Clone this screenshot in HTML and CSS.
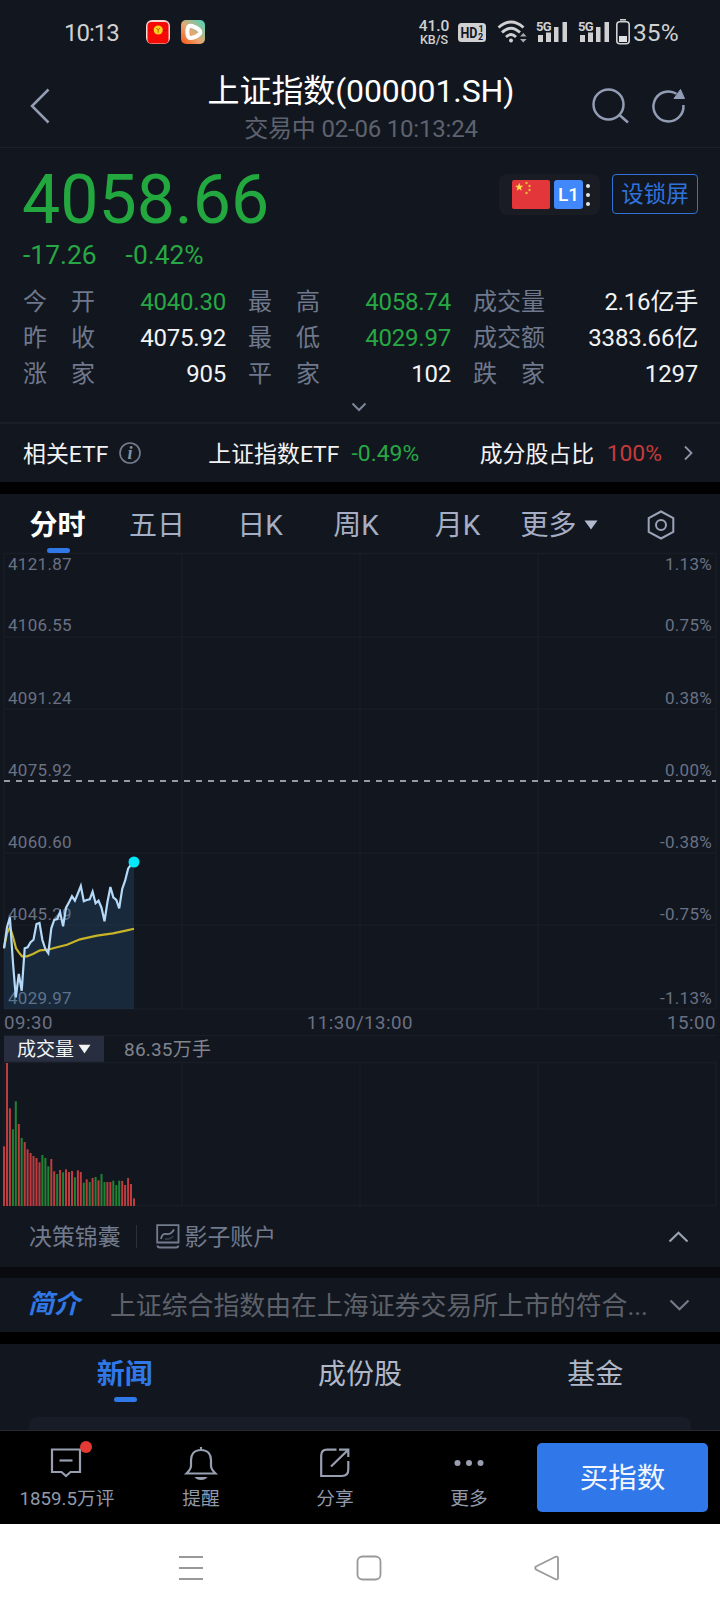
FILE: index.html
```html
<!DOCTYPE html>
<html lang="zh-CN">
<head>
    <meta charset="UTF-8">
    <title>上证指数</title>
    <link rel="stylesheet" href="styles.css">
</head>
<body>

<div class="status-bar">
    <span class="clock">10:13</span>
    <svg class="app-icon" width="24" height="24" viewBox="0 0 24 24">
        <rect width="24" height="24" rx="6" fill="#f7d5d0"/>
        <rect x="1.5" y="2" width="21" height="21.5" rx="4" fill="#f50a05"/>
        <path d="M3 10 Q12 13 21 10" fill="none" stroke="#c40b06"/>
        <circle cx="12.2" cy="10" r="4.6" fill="#fbd01c"/>
        <path d="M10.5 8 L12.2 10 L14 8 M12.2 10 V12.5" fill="none" stroke="#b56a00"/>
    </svg>
    <svg class="app-icon" width="24" height="24" viewBox="0 0 24 24">
        <defs>
            <linearGradient id="play" x1="0" y1="1" x2="1" y2="0">
                <stop offset="0" stop-color="#f9550f"/>
                <stop offset=".45" stop-color="#e8a773"/>
                <stop offset="1" stop-color="#3fd8c0"/>
            </linearGradient>
        </defs>
        <rect width="24" height="24" rx="5" fill="url(#play)"/>
        <path d="M7 7.5 Q8 5 11 6 Q17 8 19 11 Q20 13 18 14.500 Q14 18 9.500 18 Q7 18 6.500 14 Q6 10 7 7.500Z" fill="none" stroke="#fff" stroke-width="4" stroke-linejoin="round"/>
    </svg>
    <div class="net-speed"><span>41.0</span><small>KB/S</small></div>
    <svg class="hd" width="28" height="19" viewBox="0 0 28 19">
        <rect width="28" height="19" rx="3.500" fill="#d0d0d2"/>
        <text x="2.500" y="14.500" class="hd-text" textLength="17" lengthAdjust="spacingAndGlyphs">HD</text>
        <text x="20.500" y="8.800" class="hd-num">1</text>
        <text x="20" y="17.200" class="hd-num">2</text>
    </svg>
    <svg class="wifi" width="30" height="24" viewBox="0 0 30 24">
        <g fill="none" stroke="#d0d0d2" stroke-width="2.800">
            <path d="M1.500 7.500 Q14 -3.500 26.500 7.500"/>
            <path d="M5 12.500 Q14 4 23 12.500"/>
            <path d="M9 17 Q14 12 19 17"/>
        </g>
        <circle cx="14" cy="20.500" r="2" fill="#d0d0d2"/>
        <path d="M23 16.500 L26.300 13 L29.600 16.500Z M23 19 H29.600 L26.300 22.500Z" fill="#a8a9ad"/>
    </svg>
    <svg class="signal" width="32" height="24" viewBox="0 0 32 24">
        <text x="0" y="10.500">5G</text>
        <path d="M2 15h5v7H2z M10 12.500h5V22h-5z M18 7h4.500v15H18z M26.500 2H31v20h-4.500z"/>
    </svg>
    <svg class="signal" width="32" height="24" viewBox="0 0 32 24">
        <text x="0" y="10.500">5G</text>
        <path d="M2 15h5v7H2z M10 12.500h5V22h-5z M18 7h4.500v15H18z M26.500 2H31v20h-4.500z"/>
    </svg>
    <svg class="battery" width="14" height="26" viewBox="0 0 14 26">
        <path d="M4 .8H10" stroke="#d0d0d2" stroke-width="1.600"/>
        <rect x=".8" y="2.800" width="12.400" height="22" rx="3" fill="none" stroke="#d0d0d2" stroke-width="1.600"/>
        <rect x="3" y="17" width="8" height="6" fill="#e2e2e4"/>
    </svg>
    <span class="percent">35%</span>
</div>

<header class="header">
    <svg class="back" width="20" height="36" viewBox="0 0 20 36">
        <path d="M18.500 1.500 L2 18 L18.500 34.500"/>
    </svg>
    <div class="title">
        <h1>上证指数(000001.SH)</h1>
        <p>交易中 02-06 10:13:24</p>
    </div>
    <svg class="search" width="38" height="36" viewBox="0 0 38 36">
        <circle cx="16.500" cy="16.500" r="15"/>
        <path d="M27.500 27 L36 34.500"/>
    </svg>
    <svg class="refresh" width="34" height="36" viewBox="0 0 34 36">
        <path d="M24.500 5.800 A15 15 0 1 0 31.400 17"/>
        <path class="head" d="M22 10.500 L28.500 1.500 L32.500 10.500Z"/>
    </svg>
</header>

<section class="quote">
    <div class="quote-top">
        <span class="price">4058.66</span>
        <div class="market">
            <svg width="38" height="29" viewBox="0 0 38 29">
                <rect width="38" height="29" rx="2" fill="#e2363a"/>
                <path d="M7.200 2.800 L8.300 5.700 L11.300 5.800 L8.900 7.700 L9.800 10.700 L7.200 9 L4.600 10.700 L5.500 7.700 L3.100 5.800 L6.100 5.700Z" fill="#fbdf4b"/>
                <g fill="#e9b640">
                    <circle cx="14.500" cy="3" r="1.200"/>
                    <circle cx="17.500" cy="6" r="1.200"/>
                    <circle cx="17.500" cy="10" r="1.200"/>
                    <circle cx="14.500" cy="13" r="1.200"/>
                </g>
            </svg>
            <span class="level">L1</span>
            <span class="dots"><i></i><i></i><i></i></span>
        </div>
        <button class="lock">设锁屏</button>
    </div>
    <div class="change"><span>-17.26</span><span>-0.42%</span></div>
    <div class="stats">
        <div><label>今　开</label><b class="down">4040.30</b></div>
        <div><label>最　高</label><b class="down">4058.74</b></div>
        <div><label>成交量</label><b>2.16亿手</b></div>
        <div><label>昨　收</label><b>4075.92</b></div>
        <div><label>最　低</label><b class="down">4029.97</b></div>
        <div><label>成交额</label><b>3383.66亿</b></div>
        <div><label>涨　家</label><b>905</b></div>
        <div><label>平　家</label><b>102</b></div>
        <div><label>跌　家</label><b>1297</b></div>
    </div>
    <svg class="expand" width="16" height="10" viewBox="0 0 16 10"><path d="M1.500 1.500 L8 8 L14.500 1.500"/></svg>
</section>

<section class="etf">
    <span>相关ETF</span>
    <svg class="info" width="22" height="22" viewBox="0 0 22 22">
        <circle cx="11" cy="11" r="10"/>
        <text x="11" y="17" text-anchor="middle">i</text>
    </svg>
    <span class="etf-name">上证指数ETF</span>
    <span class="etf-rate down">-0.49%</span>
    <span class="share">成分股占比</span>
    <span class="share-rate">100%</span>
    <svg class="go" width="9" height="16" viewBox="0 0 9 16"><path d="M1 1.500 L7.500 8 L1 14.500"/></svg>
</section>

<nav class="periods">
    <a class="active">分时</a>
    <a>五日</a>
    <a>日K</a>
    <a>周K</a>
    <a>月K</a>
    <a>更多<svg class="caret" width="14" height="10" viewBox="0 0 14 10"><path d="M.5 .5 H13.500 L7 9.500Z"/></svg></a>
    <a><svg class="gear" width="28" height="30" viewBox="0 0 28 30">
        <path d="M14 1.500 L26.300 8 V22 L14 28.500 L1.700 22 V8Z"/>
        <circle cx="14" cy="15" r="5"/>
    </svg></a>
</nav>

<svg class="chart" width="720" height="482" viewBox="0 0 720 482">
    <g class="grid">
        <path d="M4 .5H716 M4 84H716 M4 156H716 M4 300H716 M4 372H716 M4 456H716"/>
        <path d="M4 0V456 M182 0V456 M360 0V456 M538 0V456 M716 0V456"/>
    </g>
    <path class="base-line" d="M4 228H716"/>
    <g class="axis">
        <text x="8" y="17">4121.87</text>
        <text x="8" y="78">4106.55</text>
        <text x="8" y="151">4091.24</text>
        <text x="8" y="223">4075.92</text>
        <text x="8" y="295">4060.60</text>
        <text x="8" y="367">4045.29</text>
        <text x="8" y="451">4029.97</text>
    </g>
    <g class="axis right">
        <text x="712" y="17">1.13%</text>
        <text x="712" y="78">0.75%</text>
        <text x="712" y="151">0.38%</text>
        <text x="712" y="223">0.00%</text>
        <text x="712" y="295">-0.38%</text>
        <text x="712" y="367">-0.75%</text>
        <text x="712" y="451">-1.13%</text>
    </g>
    <polygon id="area"/>
    <polyline id="average" points="4,395 7,380 10,374.300 13,383.700 16,395.300 19,399.700 22,403.300 27,403.300 33,401 40,397.300 48,396.700 55,394.700 67,391.700 80,386.300 97,382.700 113,380.300 127,377.300 134,375.700"/>
    <polyline id="price"/>
    <circle cx="134" cy="309" r="5.500" fill="#00e8fb"/>
    <g class="time">
        <text x="4" y="476">09:30</text>
        <text x="360" y="476" text-anchor="middle">11:30/13:00</text>
        <text x="716" y="476" text-anchor="end">15:00</text>
    </g>
</svg>

<div class="volume-head">
    <span class="volume-name">成交量<svg width="13" height="10" viewBox="0 0 13 10"><path d="M.5 .8 H12.500 L6.500 9.500Z"/></svg></span>
    <span class="volume-value">86.35万手</span>
</div>
<svg class="volume" width="720" height="144" viewBox="0 0 720 144">
    <path class="grid" d="M4 .5H716 M4 143.500H716 M4 0V144 M182 0V144 M360 0V144 M538 0V144 M716 0V144"/>
    <g id="bars"></g>
</svg>

<div class="tools">
    <span>决策锦囊</span>
    <i class="divider"></i>
    <svg class="shadow-icon" width="24" height="25" viewBox="0 0 24 25">
        <path d="M1.200 1.200 H22.500 V18.500 H1.200Z M1.500 21.500 Q1.500 23.500 4 23.500 H20 Q22.300 23.500 22.300 21.500"/>
        <path d="M5 15 Q6 9.500 10 10 Q15 11 18 5.500"/>
        <path d="M9 15 Q15 15.500 17 12" opacity=".35"/>
    </svg>
    <span>影子账户</span>
    <svg class="arrow" width="21" height="12" viewBox="0 0 21 12"><path d="M1.500 10.500 L10.500 1.700 L19.500 10.500"/></svg>
</div>

<div class="intro">
    <em>简介</em>
    <span>上证综合指数由在上海证券交易所上市的符合...</span>
    <svg class="arrow" width="21" height="12" viewBox="0 0 21 12"><path d="M1.500 1.500 L10.500 10.300 L19.500 1.500"/></svg>
</div>

<nav class="tabs">
    <a class="active">新闻</a>
    <a>成份股</a>
    <a>基金</a>
</nav>
<div class="news"></div>

<footer class="actions">
    <a>
        <svg width="42" height="40" viewBox="0 0 42 40">
            <path d="M6 8.500 H34 V31 H24.500 L20 35 L15.500 31 H6Z"/>
            <path d="M13.500 19.500 H26.500"/>
            <circle class="dot" cx="40" cy="6" r="6"/>
        </svg>
        <span>1859.5万评</span>
    </a>
    <a>
        <svg width="42" height="40" viewBox="0 0 42 40">
            <path d="M21 9 C13.500 9 11 14 11 19 V25 Q11 28 6.500 32.500 H35.500 Q31 28 31 25 V19 C31 14 28.500 9 21 9Z M21 9 V6"/>
            <path class="solid" d="M14.500 36 H27.500 Q25.500 39 21 39 Q16.500 39 14.500 36Z"/>
        </svg>
        <span>提醒</span>
    </a>
    <a>
        <svg width="42" height="40" viewBox="0 0 42 40">
            <path d="M22.500 8.700 H13 Q7.200 8.700 7.200 14.500 V35 H28 Q34.300 35 34.300 28.500 V20"/>
            <path d="M17 25.500 L34 9 M25 8.700 H34.300 V16"/>
        </svg>
        <span>分享</span>
    </a>
    <a>
        <svg width="42" height="40" viewBox="0 0 42 40">
            <g class="solid"><circle cx="9.500" cy="22" r="3"/><circle cx="21" cy="22" r="3"/><circle cx="32.500" cy="22" r="3"/></g>
        </svg>
        <span>更多</span>
    </a>
    <button class="buy">买指数</button>
</footer>

<div class="system-nav">
    <svg width="26" height="26" viewBox="0 0 26 26"><path d="M1 2H25 M1 13H25 M1 24H25"/></svg>
    <svg width="26" height="26" viewBox="0 0 26 26"><rect x="1.500" y="1.500" width="23" height="23" rx="5"/></svg>
    <svg width="26" height="26" viewBox="0 0 26 26"><path d="M2 11.500 L21.500 1.800 Q24 1 24 3.500 V22.500 Q24 25 21.500 24.200 L2 14.500 Q.5 13 2 11.500Z"/></svg>
</div>

<script>
    const STEP = 130 / 44;

    // Curva por minuto
    const prices = [395.3, 374.3, 364.3, 408.7, 444.3, 421, 437.7, 395.3, 394.3, 389.3, 386.7, 371, 370, 387, 396,
        400.3, 375.3, 367, 366, 359.3, 373.3, 354.7, 349.3, 343.3, 347.7, 340.3, 333, 348.3, 347, 346.3, 338.7,
        350.3, 347.7, 354.7, 368.3, 349.3, 334, 344.3, 347, 355.3, 336, 327.7, 315.7, 311.5, 309];
    const points = prices.map((y, i) => (4 + i * STEP).toFixed(1) + "," + y).join(" ");
    document.getElementById("price").setAttribute("points", points);
    document.getElementById("area").setAttribute("points", "4,456 " + points + " 134,456");

    // Volumen: alto y color
    const heights = [59.7, 143, 97.7, 76.7, 104.7, 82, 68, 64, 56.7, 53, 50, 48, 43.7, 51, 48, 39.7, 47, 34.7, 32,
        36, 33.7, 36.7, 34, 35, 28.7, 35.7, 34, 23.3, 26.7, 24, 28, 29, 25.7, 32, 24, 24, 24, 25.3, 21, 25.3, 25,
        21, 28, 22, 7.7];
    const colors = "rrrggrgrrrrrrgggrrgrgrrrgrrgrgrgrggrrgggrrrrr";
    let bars = "";
    heights.forEach((h, i) => {
        const x = (3 + i * STEP).toFixed(1);
        bars += `<rect class="${colors[i]}" x="${x}" y="${144 - h}" width="2" height="${h}"/>`;
    });
    document.getElementById("bars").innerHTML = bars;
</script>

</body>
</html>
```
FILE: styles.css
```css
* {
    box-sizing: border-box;
}
body {
    margin: 0;
    width: 720px;
    background-color: #12171f;
    color: #f2f3f5;
    font-family: Roboto, "Noto Sans CJK SC", sans-serif;
    font-size: 24px;
}
svg {
    display: block;
    flex: none;
    overflow: visible;
}
span, a, label, b {
    white-space: nowrap;
}
button {
    padding: 0;
    font-family: inherit;
}
.down {
    color: #27a844;
}

/* barra de estado */
.status-bar {
    display: flex;
    align-items: center;
    height: 64px;
    padding-left: 64px;
    color: #d0d0d2;
}
.clock {
    width: 82px;
    padding-top: 1px;
    font-size: 24px;
    letter-spacing: -1px;
}
.app-icon {
    margin-right: 11px;
}
.net-speed {
    display: flex;
    flex-direction: column;
    align-items: center;
    width: 34px;
    margin-left: 201px;
    font-weight: 500;
    font-size: 15.500px;
    line-height: 13px;
}
.net-speed small {
    font-size: 12.500px;
    line-height: 11px;
    margin-top: 1px;
}
.hd {
    margin-left: 7px;
}
.hd-text {
    font-size: 14px;
    font-weight: bold;
    fill: #12171f;
}
.hd-num {
    font-size: 9px;
    font-weight: bold;
    fill: #12171f;
}
.wifi {
    margin-left: 11px;
}
.signal {
    margin-left: 9px;
    fill: #d0d0d2;
}
.signal + .signal {
    margin-left: 10px;
}
.signal text {
    font-size: 13px;
    font-weight: bold;
    letter-spacing: -.8px;
}
.battery {
    margin-left: 6px;
}
.percent {
    margin-left: 3px;
    padding-top: 1px;
    font-size: 24.500px;
    letter-spacing: .1px;
}

/* cabecera */
.header {
    display: flex;
    align-items: flex-start;
    height: 84px;
    border-bottom: 1px solid #1b2029;
}
.header svg {
    margin-top: 24px;
    fill: none;
    stroke: #929cb4;
    stroke-width: 2.500;
}
.header .back {
    margin-left: 30px;
}
.title {
    width: 542px;
    padding-left: 80px;
    text-align: center;
}
.title h1 {
    margin: 7px 0 0;
    font-size: 32px;
    font-weight: normal;
    line-height: 40px;
    letter-spacing: -.1px;
    color: #fff;
}
.title p {
    margin: 3px 0 0;
    font-size: 24px;
    line-height: 30px;
    letter-spacing: -.2px;
    color: #5e626e;
}
.header .refresh {
    margin-left: 22px;
}
.refresh .head {
    fill: #929cb4;
    stroke-width: 1;
}

/* cotización */
.quote {
    height: 276px;
    padding: 0 22px 0 23px;
    border-bottom: 2px solid #1a1e27;
}
.quote-top {
    display: flex;
    align-items: flex-start;
    height: 85px;
    padding-top: 26px;
}
.price {
    flex: 1;
    font-size: 68px;
    line-height: 53px;
    color: #22a83f;
    margin-left: -1px;
}
.market {
    display: flex;
    align-items: center;
    width: 101px;
    height: 41px;
    padding-left: 13px;
    border-radius: 8px;
    background-color: #191c23;
}
.level {
    width: 29px;
    height: 29px;
    margin: 0 3px 0 4px;
    border-radius: 3px;
    background-color: #4189fb;
    color: #fff;
    font-size: 19px;
    font-weight: 500;
    line-height: 29px;
    text-align: center;
}
.dots i {
    display: block;
    width: 4px;
    height: 4px;
    margin: 5px 0;
    border-radius: 50%;
    background-color: #e4e5e8;
}
.lock {
    width: 86px;
    height: 40px;
    margin-left: 12px;
    padding-bottom: 4px;
    border: 1px solid #3172d8;
    border-radius: 4px;
    background: none;
    color: #2f72dc;
    font-size: 22.500px;
}
.change {
    height: 44px;
    font-size: 26.400px;
    line-height: 44px;
    color: #27a844;
}
.change span {
    display: inline-block;
    margin-right: 29px;
}
.stats {
    display: grid;
    grid-template-columns: 203px 203px 225px;
    column-gap: 22px;
    grid-auto-rows: 36px;
    padding-top: 7px;
    line-height: 36px;
}
.stats div {
    display: flex;
    justify-content: space-between;
}
.stats label {
    color: #6f788c;
}
.stats b {
    font-weight: normal;
    letter-spacing: -.2px;
}
.expand {
    margin: 10px auto 0 328px;
    fill: none;
    stroke: #7d8699;
    stroke-width: 2;
}

/* fila de ETF */
.etf {
    display: flex;
    align-items: center;
    height: 70px;
    padding-left: 23px;
    border-bottom: 12px solid #000;
    font-size: 22.900px;
}
.etf span {
    padding-bottom: 3px;
}
.info {
    margin-left: 11px;
    fill: none;
    stroke: #757c8c;
    stroke-width: 1.600;
}
.info text {
    font: italic bold 18px "Liberation Serif", serif;
    fill: #8a909d;
    stroke: none;
}
.etf-name {
    margin-left: 67px;
}
.etf .etf-rate, .etf .share-rate {
    padding-bottom: 0;
}
.etf-rate {
    margin-left: 12px;
}
.share {
    width: 114px;
    margin-left: auto;
}
.share-rate {
    margin-left: 13px;
    color: #c73a3c;
}
.go {
    margin: 0 27px 0 22px;
    fill: none;
    stroke: #8d95a6;
    stroke-width: 1.800;
}

/* periodos */
.periods {
    display: grid;
    grid-template-columns: 97px 102px 104px 88px 115px 88px 115px;
    grid-template-rows: 59px;
    height: 59px;
    padding-left: 9px;
    font-size: 28px;
    line-height: 59px;
    color: #a5aec4;
}
.periods a {
    display: flex;
    justify-content: center;
    align-items: center;
    position: relative;
    padding-top: 4px;
}
.periods .active {
    color: #fff;
    font-weight: bold;
}
.periods .active::after, .tabs .active::after {
    content: "";
    position: absolute;
    left: 50%;
    width: 23px;
    height: 5px;
    margin-left: -11px;
    border-radius: 3px;
    background-color: #3078e8;
}
.periods .active::after {
    bottom: 0;
}
.caret {
    margin: -2px 0 0 7px;
    fill: #b0b9ce;
}
.gear {
    margin-top: -1px;
    fill: none;
    stroke: #9aa3b8;
    stroke-width: 2;
}

/* gráfico */
.grid {
    fill: none;
    stroke: #181d26;
    stroke-width: 1.500;
}
.base-line {
    stroke: #c3c6cd;
    stroke-width: 1.500;
    stroke-dasharray: 6 6;
}
.axis {
    font-size: 17px;
    letter-spacing: .3px;
    fill: #6a7184;
}
.right {
    text-anchor: end;
}
.time {
    font-size: 18.700px;
    letter-spacing: .5px;
    fill: #6a7184;
}
#area {
    fill: rgba(50, 120, 175, .19);
}
#average {
    fill: none;
    stroke: #c9b428;
    stroke-width: 2.200;
}
#price {
    fill: none;
    stroke: #b5daf9;
    stroke-width: 2.200;
}
.volume-head {
    display: flex;
    height: 27px;
    margin: 0 4px;
    border-top: 1px solid #191e27;
    font-size: 19px;
    line-height: 27px;
}
.volume-name {
    display: flex;
    align-items: center;
    width: 100px;
    padding-left: 13px;
    background-color: #282e40;
}
.volume-name svg {
    margin-left: 4px;
    fill: #f2f3f5;
}
.volume-value {
    margin-left: 20px;
    color: #80848c;
    letter-spacing: .2px;
}
.r {
    fill: #bd3c40;
}
.g {
    fill: #1d8434;
}

/* herramientas e introducción */
.tools, .intro {
    display: flex;
    align-items: center;
}
.tools {
    height: 61px;
    padding-left: 29px;
    font-size: 22.900px;
    color: #727a8d;
}
.tools span {
    padding-bottom: 3px;
}
.divider {
    width: 1px;
    height: 23px;
    margin: 0 19px 0 15px;
    background-color: #2b303c;
}
.shadow-icon {
    margin-right: 5px;
    fill: none;
    stroke: #747c8f;
    stroke-width: 1.800;
}
.arrow {
    margin: 0 31px 0 auto;
    fill: none;
    stroke: #9aa1b0;
    stroke-width: 2.200;
}
.intro {
    height: 77px;
    padding-left: 28px;
    border-top: 11px solid #0a0b0f;
    border-bottom: 12px solid #000;
    font-size: 25.900px;
    letter-spacing: -.02px;
    color: #5e616a;
}
.intro span {
    padding-bottom: 4px;
}
.intro em {
    width: 82px;
    padding-bottom: 8px;
    font-weight: bold;
    color: #2f78e6;
}
.intro .arrow {
    margin-right: 30px;
    stroke: #747a88;
}

/* noticias */
.tabs {
    display: grid;
    grid-template-columns: repeat(3, 1fr);
    height: 73px;
    padding: 0 7px;
    font-size: 28px;
    line-height: 61px;
    text-align: center;
    color: #b0b7c8;
}
.tabs a {
    position: relative;
}
.tabs .active {
    color: #3078e8;
    font-weight: bold;
}
.tabs .active::after {
    top: 53px;
}
.news {
    height: 13px;
    margin: 0 29px;
    border-radius: 8px 8px 0 0;
    background-color: #171c27;
}

/* barra inferior */
.actions {
    display: grid;
    grid-template-columns: repeat(4, 134px) 172px;
    height: 94px;
    border-top: 1px solid #25282e;
    background-color: #000;
}
.actions a {
    display: flex;
    flex-direction: column;
    align-items: center;
    padding-top: 10px;
    font-size: 18.700px;
    line-height: 28px;
    color: #9199aa;
}
.actions a span {
    margin-top: 4px;
}
.actions svg {
    fill: none;
    stroke: #989fb0;
    stroke-width: 2.200;
}
.actions .solid {
    fill: #989fb0;
    stroke: none;
}
.actions .dot {
    fill: #e53935;
    stroke: none;
}
.buy {
    height: 69px;
    margin: 12px 0 0 1px;
    padding-bottom: 4px;
    border: none;
    border-radius: 5px;
    background-color: #3078ea;
    color: #f3f6fc;
    font-size: 28.500px;
}
.system-nav {
    display: flex;
    height: 88px;
    padding-left: 178px;
    align-items: center;
    gap: 152px;
    background-color: #fff;
}
.system-nav svg {
    fill: none;
    stroke: #999;
    stroke-width: 1.800;
}
```
